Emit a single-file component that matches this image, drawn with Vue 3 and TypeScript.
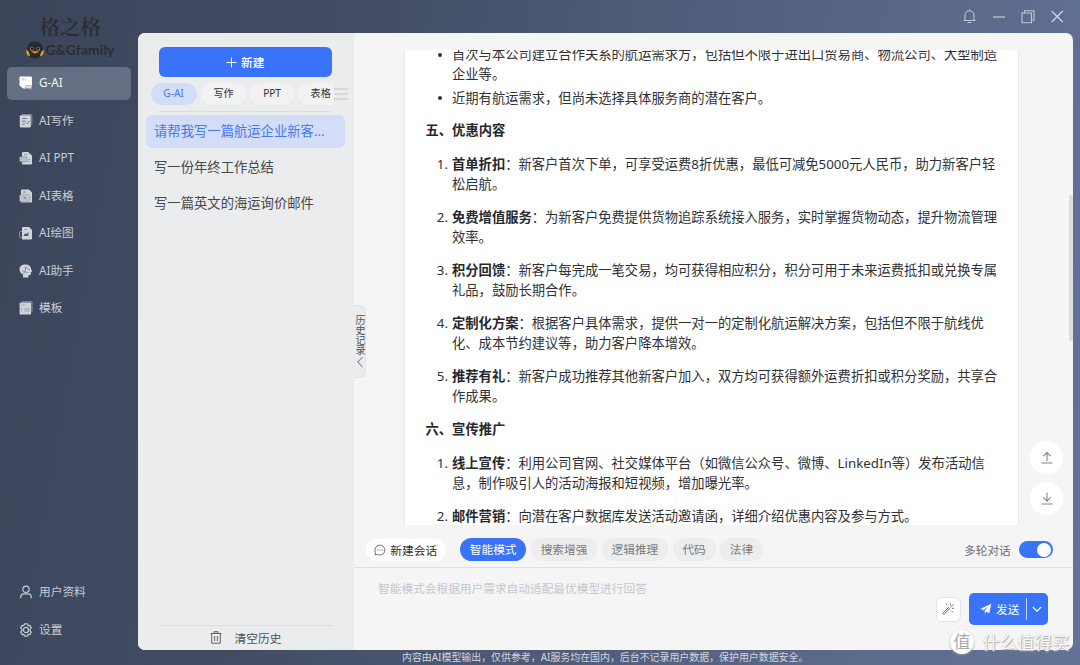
<script setup lang="ts">
import { ref } from 'vue'

interface NavItem { label: string; icon: string }
interface DocItem { title: string; lines: string[] }

const nav: NavItem[] = [
  { label: 'G-AI', icon: 'chat' },
  { label: 'AI写作', icon: 'write' },
  { label: 'AI PPT', icon: 'ppt' },
  { label: 'AI表格', icon: 'sheet' },
  { label: 'AI绘图', icon: 'draw' },
  { label: 'AI助手', icon: 'head' },
  { label: '模板', icon: 'template' },
]
const activeNav = ref(0)

const tabs = ['G-AI', '写作', 'PPT', '表格']
const activeTab = ref(0)

const history = ['请帮我写一篇航运企业新客...', '写一份年终工作总结', '写一篇英文的海运询价邮件']
const activeHistory = ref(0)

const audience: string[][] = [
  ['首次与本公司建立合作关系的航运需求方，包括但不限于进出口贸易商、物流公司、大型制造', '企业等。'],
  ['近期有航运需求，但尚未选择具体服务商的潜在客户。'],
]
const offers: DocItem[] = [
  { title: '首单折扣', lines: ['新客户首次下单，可享受运费8折优惠，最低可减免5000元人民币，助力新客户轻', '松启航。'] },
  { title: '免费增值服务', lines: ['为新客户免费提供货物追踪系统接入服务，实时掌握货物动态，提升物流管理', '效率。'] },
  { title: '积分回馈', lines: ['新客户每完成一笔交易，均可获得相应积分，积分可用于未来运费抵扣或兑换专属', '礼品，鼓励长期合作。'] },
  { title: '定制化方案', lines: ['根据客户具体需求，提供一对一的定制化航运解决方案，包括但不限于航线优', '化、成本节约建议等，助力客户降本增效。'] },
  { title: '推荐有礼', lines: ['新客户成功推荐其他新客户加入，双方均可获得额外运费折扣或积分奖励，共享合', '作成果。'] },
]
const promos: DocItem[] = [
  { title: '线上宣传', lines: ['利用公司官网、社交媒体平台（如微信公众号、微博、LinkedIn等）发布活动信', '息，制作吸引人的活动海报和短视频，增加曝光率。'] },
  { title: '邮件营销', lines: ['向潜在客户数据库发送活动邀请函，详细介绍优惠内容及参与方式。'] },
]
const sections = [
  { heading: '五、优惠内容', items: offers },
  { heading: '六、宣传推广', items: promos },
]

const modes = ['智能模式', '搜索增强', '逻辑推理', '代码', '法律']
const activeMode = ref(0)
const multiTurn = ref(true)
</script>

<template>
  <div class="window">
    <aside class="sidebar">
      <div class="brand">
        <div class="brand-cn">格之格</div>
        <div class="brand-en">
          <svg width="18" height="18" viewBox="0 0 18 18">
            <path d="M1.200 9C1.200 4 4 .3 9 .3s7.800 3.700 7.800 8.700c0 5.500-3.300 8.700-7.800 8.700S1.200 14.500 1.200 9z" fill="#282a2f" />
            <path d="M.2 9c1.800.3 3.300 2.500 3.800 6.200C1.500 15 0 12.500.2 9zM17.800 9c-1.800.3-3.300 2.500-3.800 6.200 2.500-.2 4-2.700 3.800-6.200z" fill="#e3a32a" />
            <circle cx="5.800" cy="8" r="2" fill="#a98473" /><circle cx="12.200" cy="8" r="2" fill="#a98473" />
            <circle cx="6" cy="7.800" r="1.300" fill="#191a1d" /><circle cx="12" cy="7.800" r="1.300" fill="#191a1d" />
            <path d="M5 10.800Q9 9.200 13 10.800 9 14.200 5 10.800z" fill="#e77b25" />
          </svg>
          <span>G&amp;Gfamily</span>
        </div>
      </div>
      <nav class="nav">
        <div v-for="(item, i) in nav" :key="item.label" class="nav-item" :class="{ active: i === activeNav }" @click="activeNav = i">
          <svg class="nav-icon" width="14" height="14" viewBox="0 0 14 14">
            <template v-if="item.icon === 'chat'">
              <path d="M1.500.5h10.300a1.200 1.200 0 0 1 1.200 1.200v8.800H6.500l.5 2H4L.5 9.500V1.500a1 1 0 0 1 1-1z" fill="#fff" />
              <path d="M7 9.500h5.500v3h-1l1 1.200-2.500-1.200H7z" fill="#dfe2e7" stroke="#8c95a5" stroke-width=".5" />
              <path d="M2.500 4.500 3.700 2l1.200 2.500M6.300 2v2.500" fill="none" stroke="#a9afbb" stroke-width=".6" />
            </template>
            <template v-else-if="item.icon === 'write'">
              <path d="M3 .7h9.800v10" fill="none" stroke="#8992a5" />
              <rect x=".8" y="1.300" width="11" height="12.200" rx="1.300" fill="#d0d4dc" />
              <path d="M3 4.500h5M3 7.300h3.500M3 10h3M7 8.500l1.300 1.300 2.500-3" fill="none" stroke="#636e83" stroke-width=".9" />
            </template>
            <template v-else-if="item.icon === 'ppt'">
              <path d="M3 2a1 1 0 0 1 1-1h5l4 3.500v8a1 1 0 0 1-1 1H3z" fill="#d0d4dc" />
              <rect x=".6" y="5.800" width="7.200" height="5" rx="1" fill="#b9bfca" stroke="#7b859a" stroke-width=".6" />
              <path d="M5 3.500h3M9 8.500h2M9 10.500h2" stroke="#79839a" stroke-width=".7" />
            </template>
            <template v-else-if="item.icon === 'sheet'">
              <path d="M2 1.500A1 1 0 0 1 3 .5h7l3 3v9a1 1 0 0 1-1 1H2z" fill="#d0d4dc" />
              <rect x=".7" y="5.700" width="10" height="6.800" rx="1" fill="#c3c8d1" stroke="#8b94a6" stroke-width=".6" />
              <path d="m4.500 7.700 2.500 2.500m0-2.500-2.500 2.500M4 3h3" stroke="#69748a" stroke-width=".8" />
            </template>
            <template v-else-if="item.icon === 'draw'">
              <path d="M3 2a1 1 0 0 1 1-1h6l3 3v8.500a1 1 0 0 1-1 1H3z" fill="#d0d4dc" />
              <path d="M3 5.500H1.500a1 1 0 0 0-1 1v4a1 1 0 0 0 1 1H3" fill="none" stroke="#8992a5" />
              <path d="M4.500 10 6 7.300l1.200 1L9.300 6v4z" fill="#4c586e" /><path d="M5 3.500h3" stroke="#79839a" stroke-width=".7" />
            </template>
            <template v-else-if="item.icon === 'head'">
              <path d="M6 .5c4 0 6 2 6 4.500l1.300 2.600-1.500.7v2.700H9.500v2.500H4V10.500C1.500 9.200.5 7.500.5 5.300.5 2.500 3 .5 6 .5z" fill="#d0d4dc" />
              <path d="M5.500 3.500h2l2 2H11M3 7h2l2.500 1.500h2M6.500 3.500v3l-2 3.500" fill="none" stroke="#79839a" stroke-width=".8" />
            </template>
            <template v-else>
              <path d="M3 .7h10v10.500" fill="none" stroke="#8992a5" />
              <rect x=".6" y="1.500" width="11.500" height="12" rx="1" fill="#d0d4dc" />
              <path d="M2.500 4.300h3.500M6 7.700h4V10H6zM2.500 6.500v4" fill="none" stroke="#939bab" stroke-width=".8" />
            </template>
          </svg>
          <span>{{ item.label }}</span>
        </div>
      </nav>
      <nav class="nav nav-bottom">
        <div class="nav-item">
          <svg class="nav-icon" width="14" height="14" viewBox="0 0 14 14" fill="none" stroke="#c6cad3" stroke-width="1.200">
            <circle cx="7" cy="4.300" r="3.200" /><path d="M1.800 13.200v-1.700A3 3 0 0 1 4.800 8.900h4.400a3 3 0 0 1 3 2.600v1.700" />
          </svg>
          <span>用户资料</span>
        </div>
        <div class="nav-item">
          <svg class="nav-icon" width="14" height="14" viewBox="0 0 14 14" fill="none" stroke="#c6cad3" stroke-width="1.200" stroke-linejoin="round">
            <path d="M5.500.9h3l.6 1.700 1.700-.3 1.500 2.600-1.200 1.300v1.600l1.200 1.300-1.500 2.600-1.700-.3-.6 1.700h-3l-.6-1.700-1.700.3-1.500-2.600 1.200-1.300V6.200L1.700 4.900l1.500-2.600 1.700.3z" /><circle cx="7" cy="7" r="2.600" />
          </svg>
          <span>设置</span>
        </div>
      </nav>
    </aside>

    <div class="content">
      <header class="titlebar">
        <svg width="14" height="15" viewBox="0 0 14 15" fill="none" stroke="#c3c7d1" stroke-width="1.100"><path d="M7.500.5v1.300M3 11V6.300a4.500 4.500 0 0 1 9 0V11M1.500 11.500h12M5.500 13.500h4" /></svg>
        <svg width="14" height="15" viewBox="0 0 14 15"><path d="M1 8h12" stroke="#c3c7d1" stroke-width="1.300" /></svg>
        <svg width="14" height="15" viewBox="0 0 14 15" fill="none" stroke="#c3c7d1" stroke-width="1.100"><path d="M1 4h9.500v9.800H1zM3.500 3.800V1.700H13v9.600h-2.300" /></svg>
        <svg width="14" height="15" viewBox="0 0 14 15"><path d="m1.700 2 11 11M12.700 2l-11 11" stroke="#d3d6de" stroke-width="1.300" /></svg>
      </header>

      <div class="card">
        <section class="history">
          <button class="create">
            <svg width="11" height="11" viewBox="0 0 11 11"><path d="M5.500.5v10M.5 5.500h10" stroke="#fff" /></svg>
            <span>新建</span>
          </button>
          <div class="tab-row">
            <div class="tabs">
              <span v-for="(t, i) in tabs" :key="t" class="tab" :class="{ active: i === activeTab }" @click="activeTab = i">{{ t }}</span>
            </div>
            <svg class="menu" width="14" height="12" viewBox="0 0 14 12"><path d="M0 1h14M0 6h14M0 11h14" stroke="#bfc1c4" stroke-width="1.100" /></svg>
          </div>
          <div class="rule"></div>
          <ul class="history-list">
            <li v-for="(h, i) in history" :key="h" :class="{ active: i === activeHistory }" @click="activeHistory = i">{{ h }}</li>
          </ul>
          <div class="clear">
            <svg width="12" height="13" viewBox="0 0 12 13" fill="none" stroke="#606266"><path d="M.5 2.500h11M4 2.300V.7h4v1.600M1.700 2.700v9.500h8.600V2.700M4.600 5v5M7.400 5v5" /></svg>
            <span>清空历史</span>
          </div>
        </section>

        <main class="main">
          <div class="handle">
            <span class="handle-text">历史记录</span>
            <svg width="8" height="12" viewBox="0 0 8 12"><path d="M6.500 1.200 1.700 6l4.800 4.800" fill="none" stroke="#606266" /></svg>
          </div>

          <div class="stage">
            <article class="doc">
              <div class="doc-inner">
                <ul class="bullets">
                  <li v-for="(b, i) in audience" :key="i"><span v-for="line in b" :key="line" class="line">{{ line }}</span></li>
                </ul>
                <template v-for="s in sections" :key="s.heading">
                  <h3>{{ s.heading }}</h3>
                  <ol>
                    <li v-for="(o, n) in s.items" :key="o.title">
                      <span class="num">{{ n + 1 }}.</span>
                      <span class="line"><strong>{{ o.title }}</strong>：{{ o.lines[0] }}</span>
                      <span v-for="line in o.lines.slice(1)" :key="line" class="line">{{ line }}</span>
                    </li>
                  </ol>
                </template>
              </div>
            </article>
            <div class="side">
              <button class="round"><svg width="12" height="13" viewBox="0 0 12 13" fill="none" stroke="#85878a" stroke-width="1.100"><path d="M6 10V2M2.300 5.200 6 1.500l3.700 3.700M.5 12h11" /></svg></button>
              <button class="round"><svg width="12" height="13" viewBox="0 0 12 13" fill="none" stroke="#85878a" stroke-width="1.100"><path d="M6 .8v8M2.300 5.400 6 9.100l3.700-3.700M.5 12h11" /></svg></button>
            </div>
            <div class="thumb"></div>
          </div>

          <div class="toolbar">
            <button class="new-chat">
              <svg width="12" height="12" viewBox="0 0 12 12"><path d="M1 10.800l.5-2.300A5 5 0 1 1 3.500 10.500z" fill="none" stroke="#606266" stroke-width=".9" /><path d="M3.300 6h1M5.500 6h1M7.700 6h1" stroke="#606266" /></svg>
              <span>新建会话</span>
            </button>
            <div class="modes">
              <button v-for="(m, i) in modes" :key="m" class="mode" :class="{ active: i === activeMode }" @click="activeMode = i">{{ m }}</button>
            </div>
            <div class="multi">
              <span>多轮对话</span>
              <button class="switch" :class="{ on: multiTurn }" @click="multiTurn = !multiTurn"><i></i></button>
            </div>
          </div>

          <div class="composer">
            <p class="placeholder">智能模式会根据用户需求自动适配最优模型进行回答</p>
            <div class="actions">
              <button class="wand">
                <svg width="14" height="14" viewBox="0 0 14 14" fill="none" stroke="#707276" stroke-width="1"><path d="M1.500 11.500 7.500 5.500l1.200 1.200-6 6zM6.300 6.700l1.200 1.200M4.800 1.700l1.500 1.500M9.500 1.500v1.800M12.500 2.200 9.300 5.500M11 6.300h2M10.500 8.800l1.500 1.500" /></svg>
              </button>
              <div class="send">
                <svg width="12" height="12" viewBox="0 0 12 12"><path d="M11.300.7.5 5.800l3 1.400 5.200-4.100-4 4.600v3l1.700-1.900 2.800 1.400z" fill="#fff" /></svg>
                <span class="send-label">发送</span>
                <span class="split"></span>
                <svg width="10" height="7" viewBox="0 0 10 7"><path d="m.8 1 4.200 4.200L9.200 1" fill="none" stroke="#fff" stroke-width="1.100" /></svg>
              </div>
            </div>
          </div>
        </main>
      </div>
      <footer class="notice">内容由AI模型输出，仅供参考，AI服务均在国内，后台不记录用户数据，保护用户数据安全。</footer>
    </div>

    <div class="stamp"><b>值</b><span>什么值得买</span></div>
  </div>
</template>

<style>
body { margin: 0; overflow: hidden; }
</style>

<style scoped>
.window {
  position: relative;
  display: flex;
  width: 1080px;
  height: 665px;
  overflow: hidden;
  background: linear-gradient(100deg, #3b455a 0%, #414c63 28%, #566382 68%, #637398 100%);
  font-family: "Noto Sans", "Noto Sans CJK SC", sans-serif;
  font-size: 11.700px;
  color: #303133;
  white-space: nowrap;
}
.window * { box-sizing: border-box; }
button { border: 0; padding: 0; margin: 0; font: inherit; color: inherit; }
svg { display: block; flex: none; }

.sidebar { width: 138px; flex: none; display: flex; flex-direction: column; padding: 14px 7px 19px; }
.brand { height: 52.500px; display: flex; flex-direction: column; color: #2b2c31; }
.brand-cn { padding-left: 32.500px; font-family: "Noto Serif CJK SC", "Noto Sans CJK SC", serif; font-size: 20.500px; font-weight: 600; line-height: 24px; height: 26px; }
.brand-en { display: flex; align-items: center; height: 20px; padding-left: 18.500px; gap: 2px; font-family: Lato, sans-serif; font-size: 13.800px; font-weight: 700; line-height: 20px; letter-spacing: .17px; }
.nav { display: flex; flex-direction: column; gap: 4.500px; }
.nav-bottom { margin-top: auto; }
.nav-item { display: flex; align-items: center; height: 33px; padding: 0 0 1.500px 12px; gap: 6px; border-radius: 5px; color: #c9cdd5; line-height: 18px; }
.nav-item.active { background: #646f84; color: #f4f5f7; }
.nav-icon { margin-top: 2px; }

.content { width: 942px; display: flex; flex-direction: column; }
.titlebar { height: 33px; display: flex; justify-content: flex-end; align-items: center; gap: 15.200px; padding-right: 16px; }
.card { width: 935.300px; height: 617px; display: flex; border-radius: 7px; overflow: hidden; background: #f5f5f5; }

.history { width: 216px; flex: none; background: #ebecee; display: flex; flex-direction: column; padding-top: 14px; }
.create { height: 30px; margin: 0 22.500px 0 21px; border-radius: 6px; background: #3873fa; color: #fff; display: flex; align-items: center; justify-content: center; gap: 4px; line-height: 18px; font-weight: 500; }
.tab-row { display: flex; align-items: center; margin-top: 5.500px; padding-left: 12.500px; }
.tabs { display: flex; gap: 4px; width: 182.500px; overflow: hidden; }
.tab { flex: none; height: 22px; line-height: 21px; padding: 0 12.800px; border-radius: 11px; background: #f2f2f2; font-size: 10.100px; }
.tab.active { background: #d4ddf7; color: #4076f6; }
.menu { margin-left: 1px; }
.rule { height: 1px; margin: 6px 22px 0 21px; background: #dcdddf; }
.history-list { list-style: none; margin: 3px 9px 0 8px; padding: 0; }
.history-list li { height: 33px; margin-bottom: 2.900px; padding-left: 8px; border-radius: 6px; font-size: 13.330px; line-height: 34px; color: #46484c; }
.history-list li.active { background: #d4ddf7; color: #4479f4; line-height: 33px; }
.clear { display: flex; align-items: center; justify-content: center; gap: 13px; height: 25px; margin: auto 22px 0 21px; padding-bottom: 1px; border-top: 1px solid #d9dadc; color: #505257; line-height: 18px; }

.main { position: relative; flex: 1; min-width: 0; display: flex; flex-direction: column; padding-top: 17px; }
.handle { position: absolute; left: 0; top: 272px; width: 12px; height: 73px; padding-top: 8.500px; border: 1.500px solid #e1e2e4; border-left: 0; border-radius: 0 7px 7px 0; background: #ebecee; display: flex; flex-direction: column; align-items: center; color: #505257; }
.handle-text { writing-mode: vertical-rl; font-size: 10px; line-height: 11px; height: 40px; }
.handle svg { margin-top: 1px; }
.stage { position: relative; height: 475px; flex: none; display: flex; padding-left: 50px; }
.doc { width: 615px; height: 475px; overflow: hidden; background: #fff; border-left: 1px solid #e8e8e8; border-right: 1px solid #e8e8e8; }
.doc-inner { margin-top: -5.600px; padding-left: 47px; font-size: 13.300px; line-height: 20px; color: #2f3135; }
.doc ul, .doc ol { list-style: none; margin: 0; padding: 0; }
.line { display: block; height: 20px; }
.bullets li { position: relative; margin-bottom: 3.300px; }
.bullets li::before { content: ""; position: absolute; left: -14px; top: 8.500px; width: 4px; height: 4px; border-radius: 50%; background: #2f3135; }
.doc h3 { margin: 12.500px 0 13.300px -26.500px; height: 20px; font-size: 13.300px; line-height: 20px; font-weight: 700; color: #26282c; }
ol li { position: relative; margin-bottom: 13.200px; }
.doc ol + h3 { margin-top: 0; }
.num { position: absolute; right: calc(100% + 4px); top: 0; }
strong { font-weight: 700; color: #26282c; }
.side { flex: 1; display: flex; flex-direction: column; justify-content: flex-end; gap: 8.500px; padding: 0 0 10px 11px; }
.round { width: 33px; height: 33px; border-radius: 50%; background: #fff; display: flex; align-items: center; justify-content: center; }
.thumb { position: absolute; right: 0; top: 145px; width: 4.500px; height: 146px; border-radius: 3px; background: #dcdddf; }

.toolbar { height: 43px; flex: none; display: flex; align-items: center; padding: 6px 20.500px 0 12px; border-bottom: 1px solid #dedfe1; }
.new-chat { width: 79.500px; height: 22px; border-radius: 11px; background: #fff; display: flex; align-items: center; justify-content: center; gap: 4px; line-height: 18px; margin-top: 1px; }
.modes { display: flex; gap: 4.500px; margin-left: 14.500px; }
.mode { height: 23px; padding: 0 9.800px; border-radius: 12px; background: #ededee; color: #797b7f; line-height: 22px; }
.mode.active { background: #3873fa; color: #fff; }
.multi { display: flex; align-items: center; gap: 8px; margin-left: auto; color: #6f7175; margin-top: 1px; }
.switch { width: 34px; height: 17px; border-radius: 9px; background: #c5c8ce; padding: 1.500px; display: flex; }
.switch.on { background: #3873fa; justify-content: flex-end; }
.switch i { width: 14px; height: 14px; border-radius: 50%; background: #fff; }
.composer { flex: 1; display: flex; justify-content: space-between; padding: 11px 25.300px 25px 24px; }
.placeholder { margin: 0; line-height: 18px; color: #c3c7cf; }
.actions { display: flex; align-items: center; align-self: flex-end; gap: 8.500px; }
.wand { width: 25px; height: 25px; border-radius: 6px; background: #fff; border: 1px solid #e3e4e8; display: flex; align-items: center; justify-content: center; }
.send { width: 79px; height: 32px; border-radius: 5px; background: #3873fa; color: #fff; display: flex; align-items: center; padding-left: 11px; }
.send-label { margin-left: 4px; line-height: 18px; padding-bottom: 1px; }
.split { width: 1px; height: 22px; margin: 0 5.500px 0 6.500px; background: #cbd9fd; }
.notice { height: 15px; padding-left: 264px; font-size: 9.930px; line-height: 14px; color: #d3d7df; }

.stamp { position: absolute; left: 950px; top: 630px; display: flex; align-items: center; gap: 8px; pointer-events: none; }
.stamp b { width: 24px; height: 24px; border-radius: 50%; background: #fff; box-shadow: 0 1px 2px #999; font-size: 17px; line-height: 23px; text-align: center; font-weight: 400; color: #aaa; }
.stamp span { font-size: 17.500px; line-height: 24px; color: #fafafa; text-shadow: 0 0 1px #bbb, 1px 1px 1px #aaa; }
</style>
